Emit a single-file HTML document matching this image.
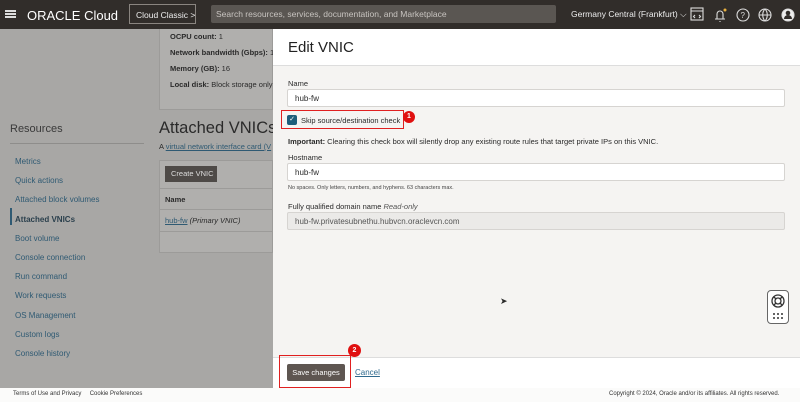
<!DOCTYPE html>
<html><head><style>
*{margin:0;padding:0;box-sizing:border-box}
body{width:800px;height:402px;overflow:hidden;font-family:"Liberation Sans",sans-serif;background:#a8a7a5;position:relative;color:#2a2a2a}
.a{position:absolute;white-space:nowrap}
.hdr{left:0;top:0;width:800px;height:29px;background:#312d2a}
.lnk{color:#2f5a73;font-size:8px}
.inp{position:absolute;left:287px;width:498px;height:18px;background:#fff;border:1px solid #d6d4d1;border-radius:2px;font-size:8px;padding:4px 0 0 7px}
</style></head><body>
<div class="a hdr"></div>
<div class="a" style="left:5px;top:10px;width:11px;height:1.5px;background:#ddd;box-shadow:0 3px #ddd,0 6px #ddd"></div>
<div class="a" style="left:27px;top:8px;color:#fff;font-size:13px">ORACLE Cloud</div>
<div class="a" style="left:129px;top:4px;width:67px;height:20px;border:1px solid #8a8580;color:#eee;font-size:8.5px;padding:5px 0 0 6px">Cloud Classic &gt;</div>
<div class="a" style="left:211px;top:5px;width:345px;height:18px;background:#5a5652;border-radius:2px;color:#c8c4c0;font-size:8.5px;padding:4px 0 0 5px">Search resources, services, documentation, and Marketplace</div>
<div class="a" style="left:571px;top:9px;color:#eee;font-size:8.5px">Germany Central (Frankfurt) ⌵</div>
<svg class="a" style="left:690px;top:6px" width="110" height="18" fill="none" stroke="#ddd" stroke-width="1.1">
<rect x="1" y="2" width="12" height="12"/><path d="M1 5h12M5 9l-1.5 1.5L5 12M9 9l1.5 1.5L9 12"/>
<path d="M25 13h10M27 13V8a3 3 0 016 0v5M30 15v1"/><circle cx="35" cy="4" r="1.5" fill="#e8b040" stroke="none"/>
<circle cx="53" cy="9" r="6"/><text x="50.5" y="12" fill="#ddd" stroke="none" font-size="8" font-family="Liberation Sans">?</text>
<circle cx="75" cy="9" r="6"/><path d="M69 9h12M75 3c-3 3-3 9 0 12M75 3c3 3 3 9 0 12"/>
<circle cx="98" cy="9" r="6" fill="#eee"/><circle cx="98" cy="7" r="2.3" fill="#312d2a" stroke="none"/><path d="M94 13a4 4 0 018 0" fill="#312d2a" stroke="none"/>
</svg>
<div class="a" style="left:159px;top:29px;width:114px;height:81px;background:#b0afad;border:1px solid #9c9b99;border-top:0"></div>
<div class="a" style="left:170px;top:29px;font-size:7.5px;line-height:16px"><b>OCPU count:</b> 1<br><b>Network bandwidth (Gbps):</b> 1<br><b>Memory (GB):</b> 16<br><b>Local disk:</b> Block storage only</div>
<div class="a" style="left:10px;top:123px;font-size:11px;color:#3a3a3a">Resources</div>
<div class="a" style="left:10px;top:143px;width:134px;height:1px;background:#8e8d8b"></div>
<div class="a" style="left:15px;top:152px;font-size:8px;line-height:19.2px;color:#2f5a73">Metrics<br>Quick actions<br>Attached block volumes<br><b style="color:#2a3f4c">Attached VNICs</b><br>Boot volume<br>Console connection<br>Run command<br>Work requests<br>OS Management<br>Custom logs<br>Console history</div>
<div class="a" style="left:10px;top:208px;width:1.5px;height:17px;background:#2f5a73"></div>
<div class="a" style="left:159px;top:119px;font-size:16.5px;color:#2a2a2a">Attached VNICs</div>
<div class="a" style="left:159px;top:142px;font-size:7.5px">A <u class="lnk" style="font-size:7.5px">virtual network interface card (V</u></div>
<div class="a" style="left:159px;top:160px;width:114px;height:93px;background:#b0afad;border:1px solid #9c9b99"></div>
<div class="a" style="left:165px;top:166px;width:52px;height:16px;background:#4e4a47;color:#ddd;font-size:7.5px;padding:3px 0 0 6px">Create VNIC</div>
<div class="a" style="left:160px;top:188px;width:113px;height:1px;background:#9c9b99"></div>
<div class="a" style="left:165px;top:195px;font-size:7.5px;font-weight:bold">Name</div>
<div class="a" style="left:160px;top:209px;width:113px;height:1px;background:#9c9b99"></div>
<div class="a" style="left:165px;top:216px;font-size:7.5px"><u class="lnk" style="font-size:7.5px">hub-fw</u> <i>(Primary VNIC)</i></div>
<div class="a" style="left:160px;top:231px;width:113px;height:1px;background:#9c9b99"></div>
<div class="a" style="left:273px;top:29px;width:527px;height:359px;background:#f5f4f2"></div>
<div class="a" style="left:273px;top:29px;width:527px;height:37px;background:#fff;border-bottom:1px solid #ddd"></div>
<div class="a" style="left:288px;top:39px;font-size:15px;color:#222">Edit VNIC</div>
<div class="a" style="left:288px;top:79px;font-size:7.5px">Name</div>
<div class="inp" style="top:89px">hub-fw</div>
<div class="a" style="left:281px;top:110px;width:123px;height:19px;border:1.5px solid #e02020"></div>
<div class="a" style="left:287px;top:115px;width:10px;height:10px;background:#1f5d7a;border-radius:2px;color:#fff;font-size:7px;text-align:center;line-height:10px">✓</div>
<div class="a" style="left:301px;top:116px;font-size:7.5px">Skip source/destination check</div>
<div class="a" style="left:403px;top:111px;width:12px;height:12px;border-radius:50%;background:#e01010;color:#fff;font-size:7px;font-weight:bold;text-align:center;line-height:12px">1</div>
<div class="a" style="left:288px;top:137px;font-size:7.5px"><b>Important:</b> Clearing this check box will silently drop any existing route rules that target private IPs on this VNIC.</div>
<div class="a" style="left:288px;top:153px;font-size:7.5px">Hostname</div>
<div class="inp" style="top:163px">hub-fw</div>
<div class="a" style="left:288px;top:185px;font-size:5.5px;color:#444">No spaces. Only letters, numbers, and hyphens. 63 characters max.</div>
<div class="a" style="left:288px;top:202px;font-size:7.5px">Fully qualified domain name <i style="color:#555">Read-only</i></div>
<div class="inp" style="top:212px;background:#ebeae8;color:#555">hub-fw.privatesubnethu.hubvcn.oraclevcn.com</div>
<div class="a" style="left:500px;top:296px;font-size:9px">➤</div>
<div class="a" style="left:767px;top:290px;width:22px;height:34px;background:#fff;border:1px solid #666;border-radius:4px"></div>
<svg class="a" style="left:769px;top:292px" width="18" height="30" fill="none" stroke="#333" stroke-width="1.3"><circle cx="9" cy="9" r="6"/><circle cx="9" cy="9" r="3"/><path d="M5 5l2 2M13 5l-2 2M5 13l2-2M13 13l-2-2"/><g fill="#333" stroke="none"><circle cx="5" cy="22" r="1"/><circle cx="9" cy="22" r="1"/><circle cx="13" cy="22" r="1"/><circle cx="5" cy="26" r="1"/><circle cx="9" cy="26" r="1"/><circle cx="13" cy="26" r="1"/></g></svg>
<div class="a" style="left:273px;top:357px;width:527px;height:31px;background:#fff;border-top:1px solid #ddd"></div>
<div class="a" style="left:279px;top:355px;width:72px;height:33px;border:1.5px solid #e02020"></div>
<div class="a" style="left:348px;top:344px;width:13px;height:13px;border-radius:50%;background:#e01010;color:#fff;font-size:7px;font-weight:bold;text-align:center;line-height:13px">2</div>
<div class="a" style="left:287px;top:364px;width:58px;height:17px;background:#5e5651;color:#fff;font-size:7.5px;text-align:center;line-height:17px;border-radius:2px">Save changes</div>
<div class="a lnk" style="left:355px;top:368px;text-decoration:underline;color:#2f6a8e">Cancel</div>
<div class="a" style="left:0;top:388px;width:800px;height:14px;background:#fbfbfa"></div>
<div class="a" style="left:13px;top:391px;font-size:6px;color:#333">Terms of Use and Privacy &nbsp;&nbsp;&nbsp; Cookie Preferences</div>
<div class="a" style="left:609px;top:391px;font-size:6px;color:#333">Copyright © 2024, Oracle and/or its affiliates. All rights reserved.</div>
</body></html>
